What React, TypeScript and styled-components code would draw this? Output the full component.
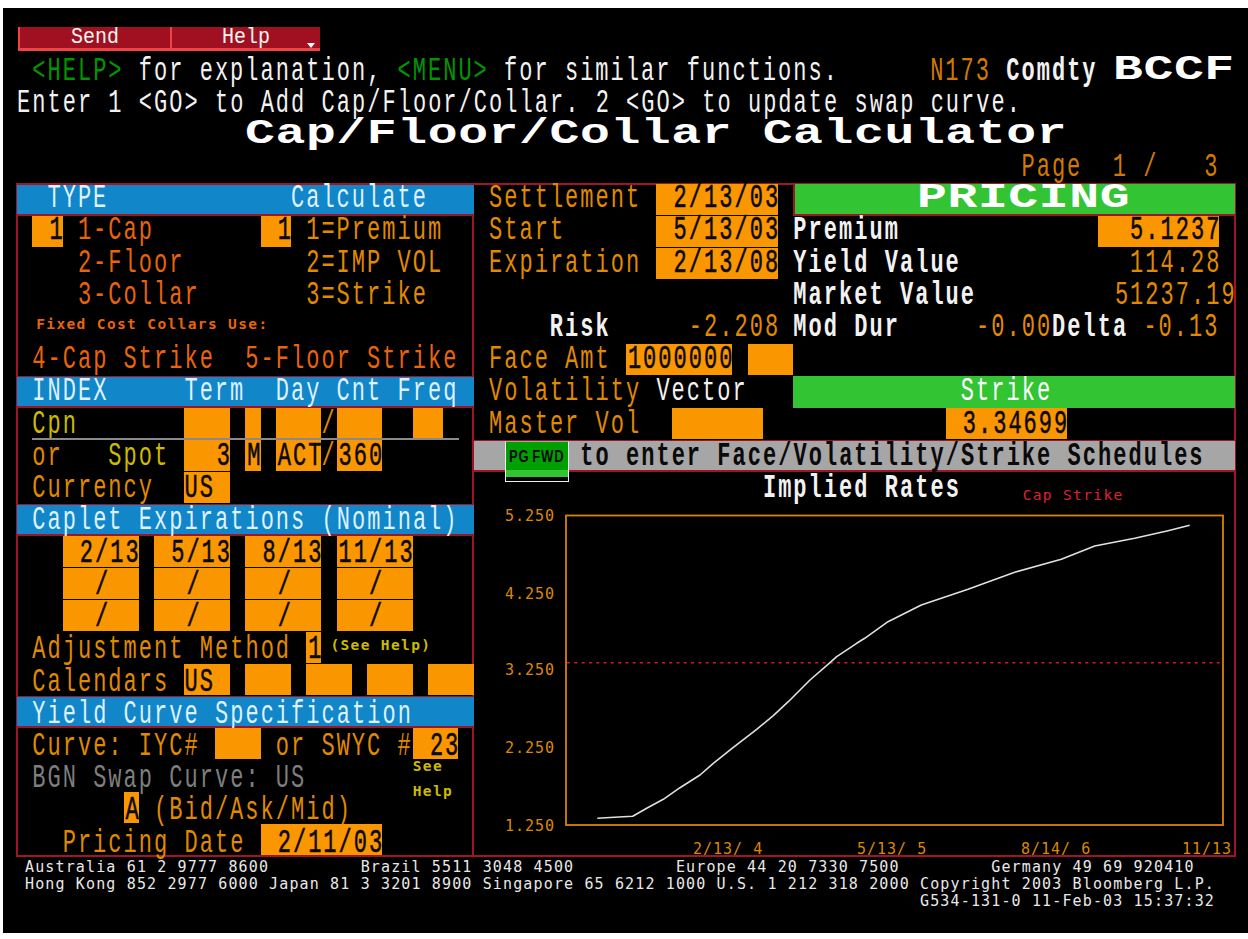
import React from "react";
import styled, { createGlobalStyle } from "styled-components";

const PITCH = 15.225;
const RULE = "#a01428";
const AMBER = "#fa9600";
const TRACK = 2.025;

const tones = {
  amber: "#e08a00",
  rust: "#e8640c",
  gold: "#cdbb00",
  white: "#f2f2f2",
  gray: "#7e7e7e",
  green: "#009600",
  page: "#d27a00",
};
type Tone = keyof typeof tones;

/* The terminal's text sits a little lower in each row going down the panel. */
const rowDrift = Array.from(
  { length: 21 },
  (_, i) => `& > :nth-child(${i + 1}) { --drift: ${(i * 0.23).toFixed(2)}px; }`
).join("\n");

const Global = createGlobalStyle`
  html, body { margin: 0; padding: 0; background: #fff; overflow: hidden; }
`;

const Screen = styled.main`
  box-sizing: border-box;
  width: 1245px;
  height: 925px;
  margin: 8px 0 0 3px;
  padding: 19px 0 0 14px;
  background: #000;
  font-family: "Liberation Mono", monospace;
  overflow: hidden;
`;

const ButtonBar = styled.nav`
  display: flex;
  height: 29px;
  padding-left: 1px;
`;

const ToolButton = styled.div<{ $w: number }>`
  position: relative;
  box-sizing: border-box;
  width: ${(p) => p.$w}px;
  height: 24px;
  background: #a01020;
  border-bottom: 3px solid #f04444;
  border-left: 2px solid #f04444;
  color: #f4f4f4;
  font-size: 20px;
  line-height: 20px;
  text-align: center;
`;

const ButtonText = styled.span`
  display: inline-block;
  transform: scaleY(1.12);
`;

const Caret = styled.span`
  position: absolute;
  right: 5px;
  bottom: 0;
  border-left: 4px solid transparent;
  border-right: 4px solid transparent;
  border-top: 5px solid #fff;
`;

const Row = styled.div<{ $cols: number; $ruled?: boolean }>`
  position: relative;
  display: grid;
  grid-template-columns: repeat(${(p) => p.$cols}, ${PITCH}px);
  grid-template-rows: 32px;
  height: 32px;
  font-size: 22px;
  letter-spacing: ${TRACK}px;
  line-height: 20px;
  white-space: pre;
  ${(p) =>
    p.$ruled &&
    `&::after {
      content: "";
      position: absolute;
      left: ${PITCH}px;
      width: ${PITCH * 28}px;
      bottom: 0;
      height: 2px;
      background: #8a8a8a;
    }`}
`;

const SectionBar = styled(Row)`
  box-sizing: border-box;
  grid-template-rows: 30px;
  background: #1186c9;
  border-top: 1px solid ${RULE};
  border-bottom: 2px solid ${RULE};
`;

const CommandBar = styled(SectionBar)`
  background: #a6a6a6;
`;

const Label = styled.div<{ $col: number; $tone?: Tone; $bold?: boolean }>`
  grid-column: ${(p) => p.$col + 1};
  grid-row: 1;
  align-self: center;
  color: ${(p) => tones[p.$tone ?? "amber"]};
  font-weight: ${(p) => (p.$bold ? 700 : 400)};
  transform: translateY(calc(var(--drift, 0.5px) - 0.5px)) scaleY(1.52);
`;

const BarTitle = styled(Label)`
  color: #dff1ff;
`;

const CommandText = styled(Label)`
  color: #0a0a0a;
  font-weight: 700;
`;

const Value = styled(Label)<{ $span: number }>`
  grid-column: ${(p) => p.$col + 1} / span ${(p) => p.$span};
  margin-right: -${TRACK}px;
  text-align: right;
`;

const Field = styled.div<{ $col: number; $span: number; $left?: boolean }>`
  grid-column: ${(p) => p.$col + 1} / span ${(p) => p.$span};
  grid-row: 1;
  display: flex;
  align-items: center;
  justify-content: ${(p) => (p.$left ? "flex-start" : "flex-end")};
  margin-bottom: 1px;
  background: ${AMBER};
  color: #0a0a0a;
  -webkit-text-stroke: 0.35px #0a0a0a;
`;

const Ink = styled.span<{ $left?: boolean }>`
  display: inline-block;
  margin-right: ${(p) => (p.$left ? 0 : -TRACK)}px;
  transform: translateY(calc(var(--drift, 0.5px) - 0.5px)) scaleY(1.52);
`;

const Wide = styled.div<{ $col: number }>`
  grid-column: ${(p) => p.$col + 1};
  grid-row: 1;
  align-self: center;
  color: #fff;
  font-size: 35px;
  font-weight: 700;
  letter-spacing: 0.44px;
  line-height: 26px;
  transform: translateY(-2px) scaleX(1.42);
  transform-origin: left center;
`;

const Small = styled.div<{ $col: number; $top: number; $tone: string; $left?: number; $thin?: boolean }>`
  grid-column: ${(p) => p.$col + 1};
  grid-row: 1;
  align-self: start;
  padding-top: ${(p) => p.$top}px;
  padding-left: ${(p) => p.$left ?? 0}px;
  color: ${(p) => p.$tone};
  font-family: "DejaVu Sans Mono", monospace;
  font-size: 14.5px;
  font-weight: ${(p) => (p.$thin ? 400 : 700)};
  letter-spacing: 1.37px;
  line-height: 14px;
`;

const SeeHelp = styled(Small)`
  line-height: 25px;
  margin-top: -6px;
`;

const Band = styled.div<{ $pad: number; $boxed?: boolean }>`
  grid-column: 22 / span 29;
  grid-row: 1;
  display: flex;
  align-items: center;
  box-sizing: border-box;
  padding-left: ${(p) => p.$pad * PITCH}px;
  background: #33c433;
  color: #fff;
  ${(p) =>
    p.$boxed &&
    `border-left: 2px solid ${RULE}; border-bottom: 2px solid ${RULE};`}
`;

const BandWide = styled.div`
  font-size: 35px;
  font-weight: 700;
  letter-spacing: 0.44px;
  line-height: 26px;
  transform: translateY(-1px) scaleX(1.42);
  transform-origin: left center;
`;

const Frame = styled.section`
  display: flex;
  width: ${PITCH * 80}px;
  height: 672px;
  outline: 2px solid ${RULE};
  outline-offset: -1px;
`;

const LeftPanel = styled.div`
  width: ${PITCH * 30}px;
  box-shadow: inset -2px 0 0 ${RULE};
  flex: none;
  ${rowDrift}
`;

const RightPanel = styled.div`
  width: ${PITCH * 50}px;
  flex: none;
  ${rowDrift}
`;

const Chip = styled.div`
  position: absolute;
  left: 31px;
  top: 0;
  box-sizing: border-box;
  width: 64px;
  height: 41px;
  border: 1.5px solid #eee;
  border-top-color: transparent;
`;

const ChipFace = styled.div`
  height: 35px;
  box-sizing: border-box;
  background: #00a000;
  border-bottom: 7px solid #33c433;
  color: #0a0a0a;
  font-family: "Liberation Sans", sans-serif;
  font-size: 13px;
  font-weight: 700;
  letter-spacing: 0.9px;
  word-spacing: -2px;
  line-height: 29px;
  text-align: center;
`;

const ChipText = styled.span`
  display: inline-block;
  transform: scaleY(1.25);
`;

const ChartSvg = styled.svg`
  display: block;
  width: 761px;
  height: 352px;
  overflow: visible;
`;

const AxisText = styled.text`
  fill: #dd8800;
  font-family: "DejaVu Sans Mono", monospace;
  font-size: 15px;
  letter-spacing: 1px;
`;

const Footer = styled.pre`
  margin: 3px 0 0 8px;
  color: #e8e8e8;
  font-family: "DejaVu Sans Mono", monospace;
  font-size: 15px;
  letter-spacing: 1.14px;
  line-height: 17px;
`;

const curve =
  "597.3,818.3 614.3,817.3 632.7,816.3 646.7,808.3 663.3,799.3 680,787.7 700,775 713.3,763.3 733.3,747.3 756.7,729.3 773.3,715.7 788.3,701.7 810,680 830,662.7 836.7,656.7 856.7,643.3 864.7,638.3 888,621.7 921.3,605 968,589.3 1014.7,572.3 1061.3,559.3 1094.7,546 1134.7,538.3 1168,530.7 1189.7,525.3";

const yLabels: [string, number][] = [
  ["5.250", 521],
  ["4.250", 599],
  ["3.250", 675],
  ["2.250", 753],
  ["1.250", 831],
];
const xLabels: [string, number][] = [
  ["2/13/ 4", 693],
  ["5/13/ 5", 857],
  ["8/14/ 6", 1021],
  ["11/13", 1182],
];

const footer = `Australia 61 2 9777 8600         Brazil 5511 3048 4500          Europe 44 20 7330 7500         Germany 49 69 920410
Hong Kong 852 2977 6000 Japan 81 3 3201 8900 Singapore 65 6212 1000 U.S. 1 212 318 2000 Copyright 2003 Bloomberg L.P.
                                                                                        G534-131-0 11-Feb-03 15:37:32`;

const F = ({ c, s, t, left }: { c: number; s: number; t?: string; left?: boolean }) => (
  <Field $col={c} $span={s} $left={left}>
    {t ? <Ink $left={left}>{t}</Ink> : null}
  </Field>
);

export default function App() {
  return (
    <Screen>
      <Global />
      <ButtonBar>
        <ToolButton $w={152}>
          <ButtonText>Send</ButtonText>
        </ToolButton>
        <ToolButton $w={150}>
          <ButtonText>Help</ButtonText>
          <Caret />
        </ToolButton>
      </ButtonBar>

      <Row $cols={80}>
        <Label $col={1} $tone="green">{"<HELP>"}</Label>
        <Label $col={8} $tone="white">for explanation,</Label>
        <Label $col={25} $tone="green">{"<MENU>"}</Label>
        <Label $col={32} $tone="white">for similar functions.</Label>
        <Label $col={60} $tone="page">N173</Label>
        <Label $col={65} $tone="white" $bold>Comdty</Label>
        <Wide $col={72}>BCCF</Wide>
      </Row>
      <Row $cols={80}>
        <Label $col={0} $tone="white">
          {"Enter 1 <GO> to Add Cap/Floor/Collar. 2 <GO> to update swap curve."}
        </Label>
      </Row>
      <Row $cols={80}>
        <Wide $col={15}>Cap/Floor/Collar Calculator</Wide>
      </Row>
      <Row $cols={80}>
        <Label $col={66} $tone="page">Page  1 /   3</Label>
      </Row>

      <Frame>
        <LeftPanel>
          <SectionBar $cols={30}>
            <BarTitle $col={2}>TYPE</BarTitle>
            <BarTitle $col={18}>Calculate</BarTitle>
          </SectionBar>
          <Row $cols={30}>
            <F c={1} s={2} t="1" />
            <Label $col={4} $tone="rust">1-Cap</Label>
            <F c={16} s={2} t="1" />
            <Label $col={19}>1=Premium</Label>
          </Row>
          <Row $cols={30}>
            <Label $col={4} $tone="rust">2-Floor</Label>
            <Label $col={19}>2=IMP VOL</Label>
          </Row>
          <Row $cols={30}>
            <Label $col={4} $tone="rust">3-Collar</Label>
            <Label $col={19}>3=Strike</Label>
          </Row>
          <Row $cols={30}>
            <Small $col={1} $top={5} $left={4} $tone={tones.rust}>Fixed Cost Collars Use:</Small>
          </Row>
          <Row $cols={30}>
            <Label $col={1} $tone="rust">4-Cap Strike</Label>
            <Label $col={15} $tone="rust">5-Floor Strike</Label>
          </Row>

          <SectionBar $cols={30}>
            <BarTitle $col={1}>INDEX</BarTitle>
            <BarTitle $col={11}>Term</BarTitle>
            <BarTitle $col={17}>Day</BarTitle>
            <BarTitle $col={21}>Cnt</BarTitle>
            <BarTitle $col={25}>Freq</BarTitle>
          </SectionBar>
          <Row $cols={30} $ruled>
            <Label $col={1} $tone="gold">Cpn</Label>
            <F c={11} s={3} />
            <F c={15} s={1} />
            <F c={17} s={3} />
            <Label $col={20}>/</Label>
            <F c={21} s={3} />
            <F c={26} s={2} />
          </Row>
          <Row $cols={30}>
            <Label $col={1}>or</Label>
            <Label $col={6} $tone="gold">Spot</Label>
            <F c={11} s={3} t="3" />
            <F c={15} s={1} t="M" />
            <F c={17} s={3} t="ACT" />
            <Label $col={20}>/</Label>
            <F c={21} s={3} t="360" />
          </Row>
          <Row $cols={30}>
            <Label $col={1}>Currency</Label>
            <F c={11} s={3} t="US" left />
          </Row>

          <SectionBar $cols={30}>
            <BarTitle $col={1}>Caplet Expirations (Nominal)</BarTitle>
          </SectionBar>
          <Row $cols={30}>
            <F c={3} s={5} t="2/13" />
            <F c={9} s={5} t="5/13" />
            <F c={15} s={5} t="8/13" />
            <F c={21} s={5} t="11/13" />
          </Row>
          {[0, 1].map((i) => (
            <Row $cols={30} key={i}>
              <F c={3} s={5} t="/  " />
              <F c={9} s={5} t="/  " />
              <F c={15} s={5} t="/  " />
              <F c={21} s={5} t="/  " />
            </Row>
          ))}
          <Row $cols={30}>
            <Label $col={1}>Adjustment Method</Label>
            <F c={19} s={1} t="1" />
            <Small $col={20} $top={6} $left={9} $tone={tones.gold}>(See Help)</Small>
          </Row>
          <Row $cols={30}>
            <Label $col={1}>Calendars</Label>
            <F c={11} s={3} t="US" left />
            <F c={15} s={3} />
            <F c={19} s={3} />
            <F c={23} s={3} />
            <F c={27} s={3} />
          </Row>

          <SectionBar $cols={30}>
            <BarTitle $col={1}>Yield Curve Specification</BarTitle>
          </SectionBar>
          <Row $cols={30}>
            <Label $col={1}>Curve: IYC#</Label>
            <F c={13} s={3} />
            <Label $col={17}>or SWYC #</Label>
            <F c={26} s={3} t="23" />
          </Row>
          <Row $cols={30}>
            <Label $col={1} $tone="gray">BGN Swap Curve: US</Label>
            <SeeHelp $col={26} $top={0} $tone={tones.gold}>{"See\nHelp"}</SeeHelp>
          </Row>
          <Row $cols={30}>
            <F c={7} s={1} t="A" />
            <Label $col={9}>(Bid/Ask/Mid)</Label>
          </Row>
          <Row $cols={30}>
            <Label $col={3}>Pricing Date</Label>
            <F c={16} s={8} t="2/11/03" />
          </Row>
        </LeftPanel>

        <RightPanel>
          <Row $cols={50}>
            <Label $col={1}>Settlement</Label>
            <F c={12} s={8} t="2/13/03" />
            <Band $pad={8} $boxed>
              <BandWide>PRICING</BandWide>
            </Band>
          </Row>
          <Row $cols={50}>
            <Label $col={1}>Start</Label>
            <F c={12} s={8} t="5/13/03" />
            <Label $col={21} $tone="white" $bold>Premium</Label>
            <F c={41} s={8} t="5.1237" />
          </Row>
          <Row $cols={50}>
            <Label $col={1}>Expiration</Label>
            <F c={12} s={8} t="2/13/08" />
            <Label $col={21} $tone="white" $bold>Yield Value</Label>
            <Value $col={41} $span={8}>114.28</Value>
          </Row>
          <Row $cols={50}>
            <Label $col={21} $tone="white" $bold>Market Value</Label>
            <Value $col={42} $span={8}>51237.19</Value>
          </Row>
          <Row $cols={50}>
            <Label $col={5} $tone="white" $bold>Risk</Label>
            <Value $col={14} $span={6}>-2.208</Value>
            <Label $col={21} $tone="white" $bold>Mod Dur</Label>
            <Label $col={33}>-0.00</Label>
            <Label $col={38} $tone="white" $bold>Delta</Label>
            <Label $col={44}>-0.13</Label>
          </Row>
          <Row $cols={50}>
            <Label $col={1}>Face Amt</Label>
            <F c={10} s={7} t="1000000" />
            <F c={18} s={3} />
          </Row>
          <Row $cols={50}>
            <Label $col={1}>Volatility</Label>
            <Label $col={12} $tone="white">Vector</Label>
            <Band $pad={11}>
              <Ink $left>Strike</Ink>
            </Band>
          </Row>
          <Row $cols={50}>
            <Label $col={1}>Master Vol</Label>
            <F c={13} s={6} />
            <F c={31} s={8} t="3.34699" />
          </Row>
          <CommandBar $cols={50}>
            <CommandText $col={7}>to enter Face/Volatility/Strike Schedules</CommandText>
            <Chip>
              <ChipFace>
                <ChipText>PG FWD</ChipText>
              </ChipFace>
            </Chip>
          </CommandBar>
          <Row $cols={50}>
            <Label $col={19} $tone="white" $bold>Implied Rates</Label>
            <Small $col={36} $top={16} $left={1} $thin $tone="#e02030">Cap Strike</Small>
          </Row>
          <ChartSvg viewBox="474 504 761 352">
            <rect x="566" y="515.5" width="657" height="309.5" fill="none" stroke="#d98400" strokeWidth="1.8" />
            <line x1="567" x2="1220" y1="662.7" y2="662.7" stroke="#d01828" strokeWidth="1.5" strokeDasharray="3 4.3" />
            <polyline points={curve} fill="none" stroke="#e0e0e0" strokeWidth="1.6" strokeLinejoin="round" />
            {yLabels.map(([t, y]) => (
              <AxisText key={t} x="505" y={y}>{t}</AxisText>
            ))}
            {xLabels.map(([t, x]) => (
              <AxisText key={t} x={x} y="854">{t}</AxisText>
            ))}
          </ChartSvg>
        </RightPanel>
      </Frame>

      <Footer>{footer}</Footer>
    </Screen>
  );
}
